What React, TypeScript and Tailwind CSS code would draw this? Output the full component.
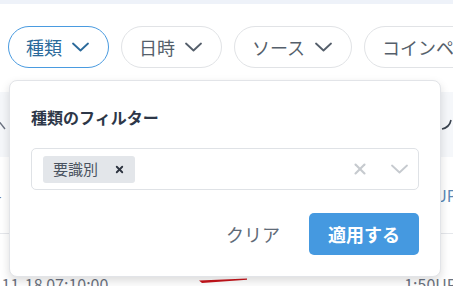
import { X } from "lucide-react";

const Chevron = ({ className }: { className?: string }) => (
    <svg width="17" height="10" viewBox="0 0 17 10" fill="none" className={className}>
        <path d="M1 1.5l7.5 7 7.5-7" stroke="currentColor" strokeWidth="1.8" strokeLinecap="round" strokeLinejoin="round" />
    </svg>
);

const pills = [
    { label: "種類", active: true },
    { label: "日時", active: false },
    { label: "ソース", active: false },
    { label: "コインペア", active: false },
];

export default function App() {
    return (
        <div className="relative w-[453px] h-[286px] overflow-hidden bg-white font-['Noto_Sans_CJK_JP',sans-serif]">
            <div className="h-1 bg-[#eef2f9]" />

            {/* Filter pills */}
            <div className="flex gap-3 pl-2 pt-[22px] whitespace-nowrap">
                {pills.map(({ label, active }) => (
                    <div key={label}
                        className={`flex h-[42px] flex-shrink-0 items-center gap-[10px] rounded-full border pl-[17px] pr-[19px] text-[18px]
              ${active ? "border-[#4a9be0] text-[#2b6a9b]" : "border-[#e1e3e6] text-[#555f6b]"}`}>
                        <span>{label}</span>
                        <Chevron />
                    </div>
                ))}
            </div>

            {/* Table behind the popup */}
            <div className="mt-6 text-[16px] text-[#6b7280]">
                <div className="flex h-[65px] items-center justify-between bg-[#f5f7fa] text-[#3b4450]">
                    <svg width="10" height="12" viewBox="0 0 10 12" className="-ml-1">
                        <path d="M2 1l7 9" stroke="#6b7280" strokeWidth="1.4" fill="none" />
                    </svg>
                    <svg width="12" height="14" viewBox="0 0 12 14">
                        <path d="M1 11c5-1 8-4 9-9" stroke="#3b4450" strokeWidth="1.6" fill="none" />
                    </svg>
                </div>
                <div className="flex h-[77px] items-center justify-between border-b border-[#e5e7eb]">
                    <span className="-ml-1">-</span>
                    <span className="-mr-1 text-[#5b87b5]">UP</span>
                </div>
                <div className="flex h-[100px] items-start justify-between pt-[38px]">
                    <span className="-ml-1">-11-18 07:10:00</span>
                    <span className="-mr-1">1:50UP</span>
                </div>
            </div>
            <svg width="50" height="6" viewBox="0 0 50 6" className="absolute left-[199px] top-[278px]">
                <path d="M0 2.5L48 0.5l0 1.2L3 5z" fill="#c8141b" />
            </svg>

            {/* Popup */}
            <div className="absolute left-[9px] top-[80px] w-[432px] h-[197px] rounded-lg border border-[#e2e4e8] bg-white px-[21px] pt-[26px] shadow-[0_4px_10px_rgba(0,0,0,0.14)]">
                <p className="text-[16px] font-bold leading-5 text-[#2d3748]">種類のフィルター</p>

                <div className="mt-[21px] flex h-[42px] items-center rounded-[5px] border border-[#dfe2e6] pl-[11px] pr-[10px]">
                    <div className="flex h-[27px] items-center gap-4 rounded-[3px] bg-[#e3e6ea] pl-[10px] pr-[10px] text-[15px] text-[#4a5360]">
                        <span>要識別</span>
                        <X size={11} strokeWidth={4} className="text-[#2d3440]" />
                    </div>
                    <div className="ml-auto flex items-center gap-[22px] text-[#c6cacf]">
                        <X size={18} strokeWidth={2.8} />
                        <Chevron />
                    </div>
                </div>

                <div className="mt-[23px] flex items-center justify-end gap-[29px]">
                    <span className="text-[18px] text-[#5f6b78]">クリア</span>
                    <button className="h-[42px] w-[110px] rounded-[5px] bg-[#4599e0] text-[18px] font-bold text-white">
                        適用する
                    </button>
                </div>
            </div>
        </div>
    );
}
